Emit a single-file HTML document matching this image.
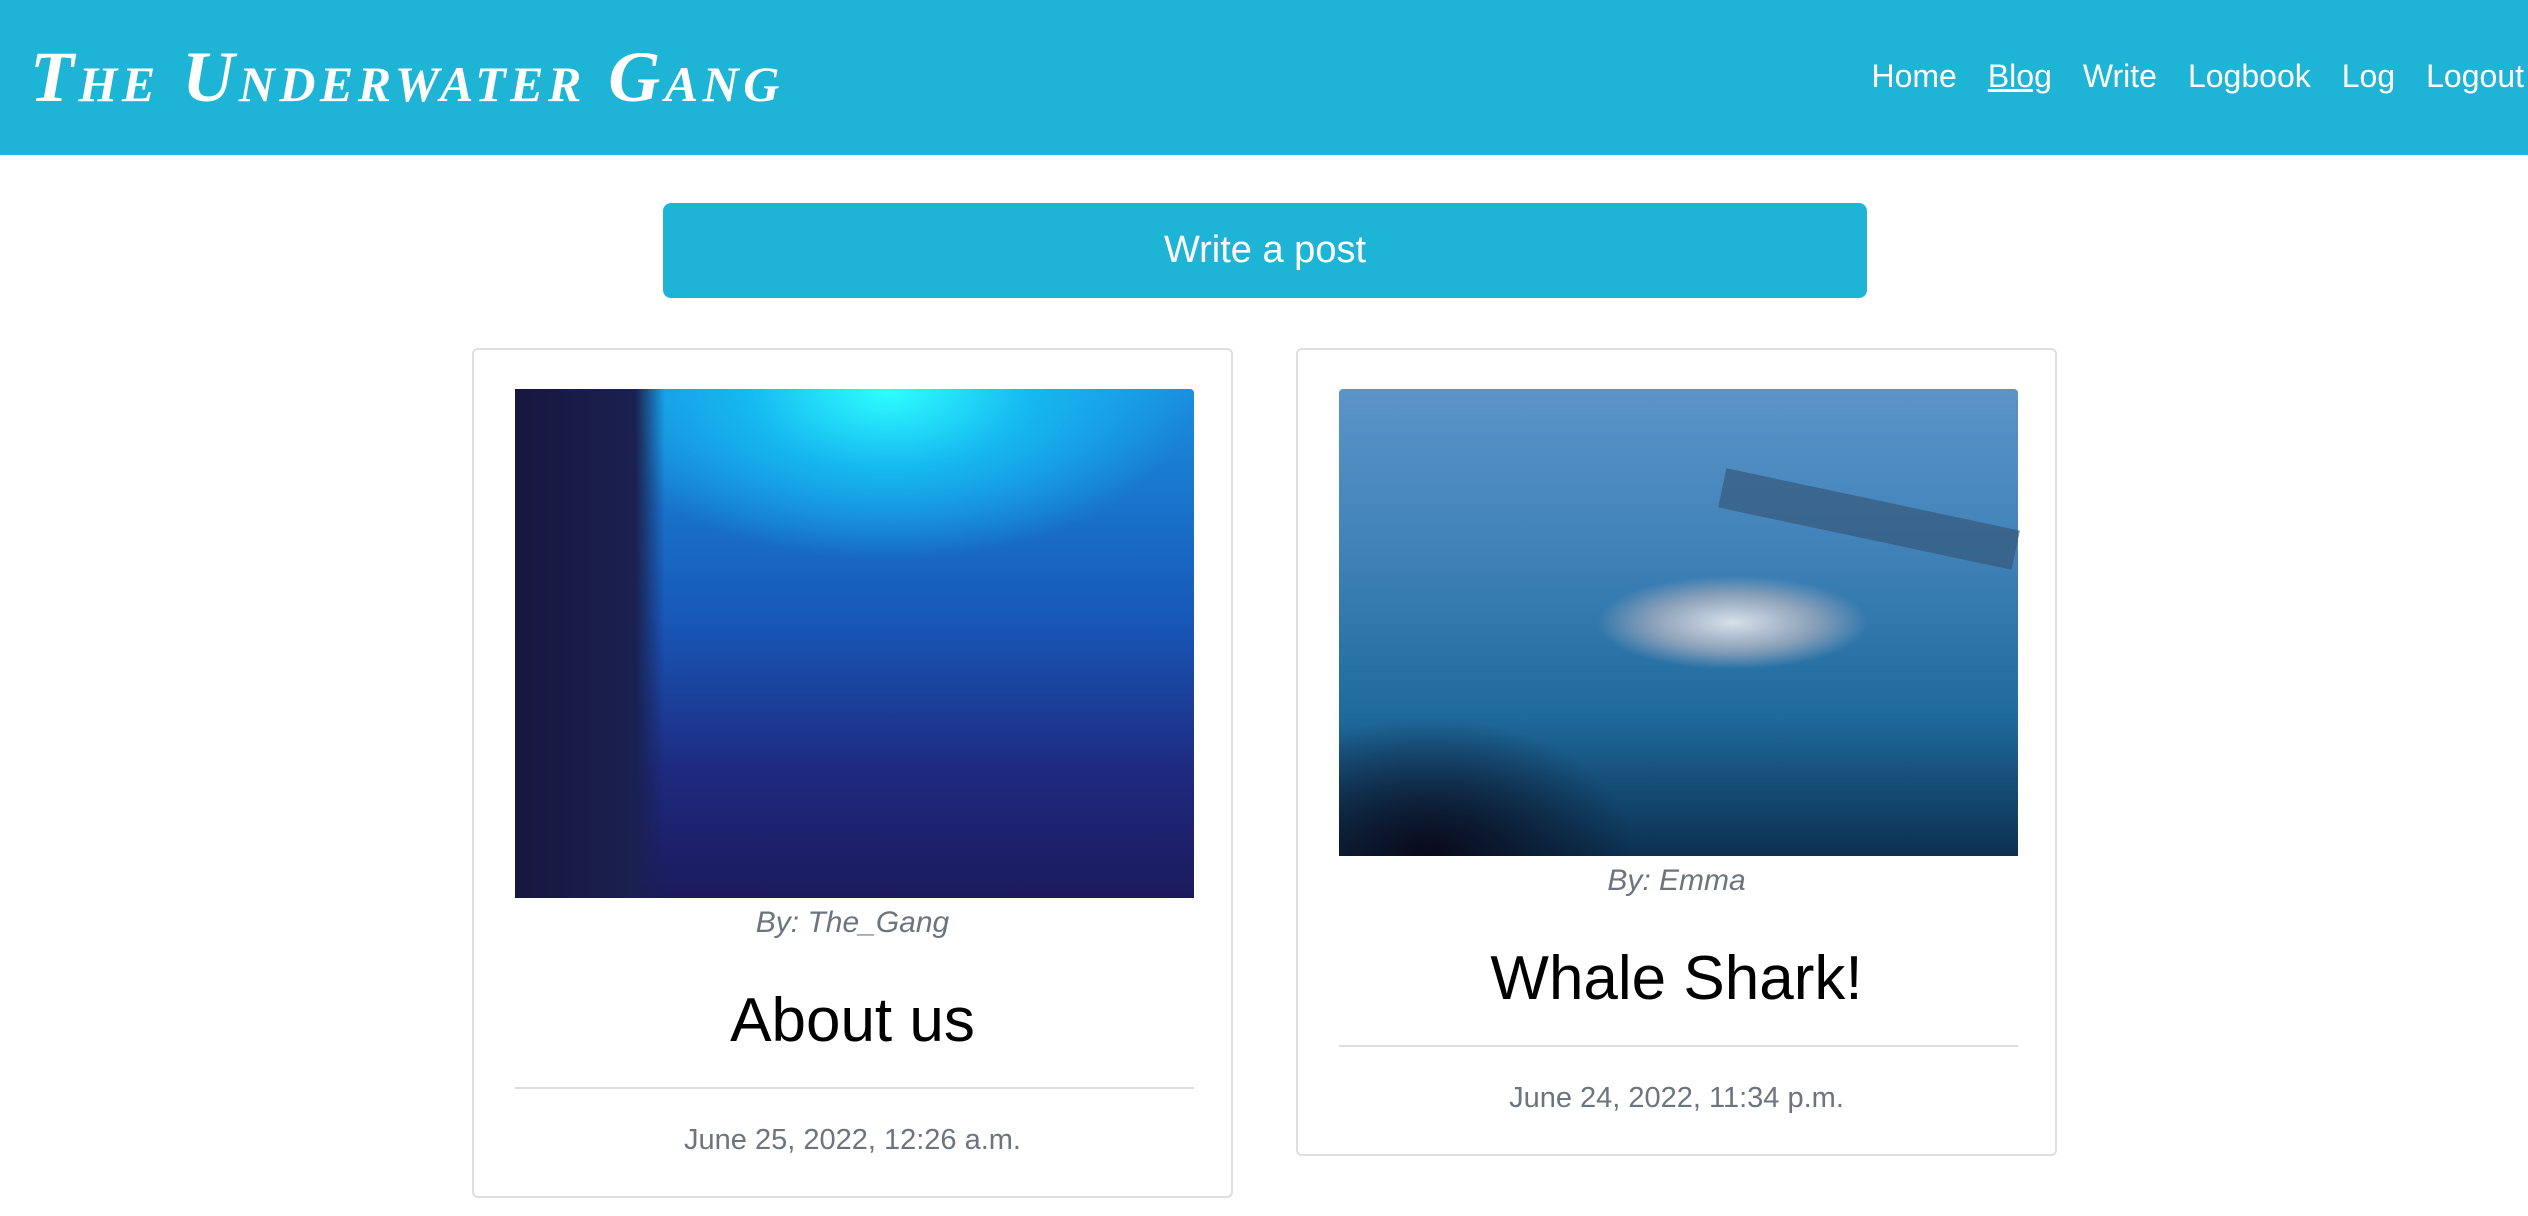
<!DOCTYPE html>
<html><head><meta charset="utf-8"><style>
*{box-sizing:border-box;margin:0;padding:0}
body{width:2528px;height:1216px;overflow:hidden;background:#fff;font-family:"Liberation Sans",sans-serif;position:relative}
.hdr{position:absolute;left:0;top:0;width:2528px;height:155px;background:#1eb4d6}
.logo{position:absolute;left:30px;top:36px;color:#fff;font-size:72px;font-weight:bold;font-style:italic;letter-spacing:4.5px;font-variant:small-caps;font-family:"Liberation Serif",serif}
.nav{position:absolute;right:4px;top:58px;color:#fff;font-size:32px}
.nav span{margin-left:31px}
.btn{position:absolute;left:663px;top:203px;width:1204px;height:95px;background:#1eb4d6;border-radius:8px;color:#fff;font-size:38px;text-align:center;line-height:95px}
.card{position:absolute;top:348px;width:761px;border:2px solid #dedede;border-radius:6px}
.img{position:absolute;left:41px;top:39px;width:679px;border-radius:4px 4px 0 0}
.by{position:absolute;left:0;width:100%;text-align:center;color:#6c757d;font-style:italic;font-size:30px}
.t{position:absolute;left:0;width:100%;text-align:center;color:#000;font-size:62px}
.hr{position:absolute;left:41px;width:679px;height:2px;background:#dedede}
.d{position:absolute;left:0;width:100%;text-align:center;color:#6c757d;font-size:29px}
</style></head><body>
<div class="hdr"><div class="logo">The Underwater Gang</div>
<div class="nav"><span>Home</span><span style="text-decoration:underline">Blog</span><span>Write</span><span>Logbook</span><span>Log</span><span>Logout</span></div></div>
<div class="btn">Write a post</div>

<div class="card" style="left:472px;height:850px">
<div class="img" style="height:509px;background:radial-gradient(ellipse 60% 45% at 55% 0%,#2effff 0%,#16b8f0 35%,transparent 75%),linear-gradient(180deg,#1a8fe0 0%,#1858b8 45%,#1e2a80 75%,#1c1a5c 100%)">
<div style="position:absolute;left:0;top:0;width:150px;height:509px;background:linear-gradient(90deg,#17173e,#1a2050 80%,rgba(20,30,80,0))"></div>
</div>
<div class="by" style="top:556px">By: The_Gang</div>
<div class="t" style="top:635px">About us</div>
<div class="hr" style="top:737px"></div>
<div class="d" style="top:774px">June 25, 2022, 12:26 a.m.</div>
</div>

<div class="card" style="left:1296px;height:808px">
<div class="img" style="height:467px;background:radial-gradient(ellipse 20% 10% at 58% 50%,#d8e0ea 0%,#8aa0b8 60%,transparent 100%),linear-gradient(180deg,#5b94c8 0%,#3f82b8 35%,#1f6a9c 70%,#0c3050 100%)">
<div style="position:absolute;left:380px;top:110px;width:300px;height:40px;background:#36597a;transform:rotate(12deg);opacity:.7"></div>
<div style="position:absolute;left:0;bottom:0;width:300px;height:140px;background:radial-gradient(ellipse at 30% 100%,#0a0a1a,transparent 70%)"></div>
</div>
<div class="by" style="top:514px">By: Emma</div>
<div class="t" style="top:593px">Whale Shark!</div>
<div class="hr" style="top:695px"></div>
<div class="d" style="top:732px">June 24, 2022, 11:34 p.m.</div>
</div>
</body></html>
